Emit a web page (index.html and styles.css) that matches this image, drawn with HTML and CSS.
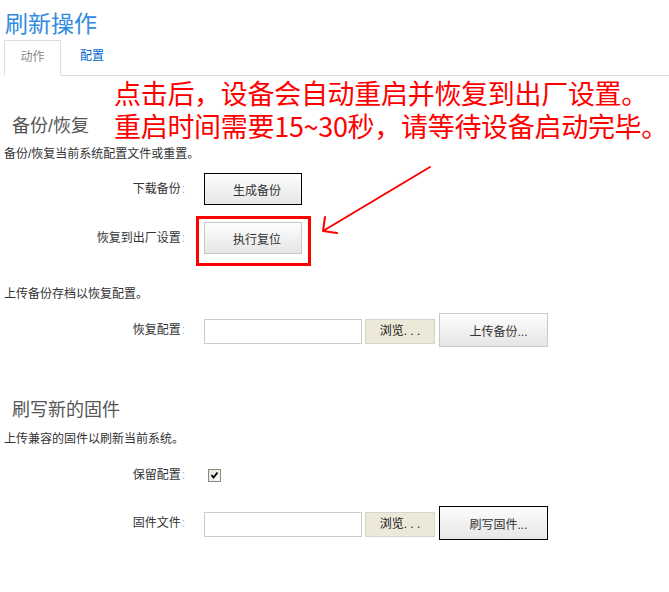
FILE: index.html
```html
<!DOCTYPE html>
<html lang="zh-CN">
<head>
    <meta charset="UTF-8">
    <title>刷新操作</title>
    <link rel="stylesheet" href="styles.css">
</head>
<body>
    <div class="page">
        <h2 class="page-title">刷新操作</h2>

        <ul class="tabs">
            <li class="active"><a href="#">动作</a></li>
            <li><a href="#">配置</a></li>
        </ul>

        <div class="section">
            <h3>备份/恢复</h3>
            <p class="desc">备份/恢复当前系统配置文件或重置。</p>

            <div class="row row-backup">
                <label class="row-label">下载备份<span class="colon">:</span></label>
                <button class="btn btn-focus">生成备份</button>
            </div>

            <div class="row row-reset">
                <label class="row-label">恢复到出厂设置<span class="colon">:</span></label>
                <span class="marked">
                    <button class="btn">执行复位</button>
                </span>
            </div>

            <p class="desc desc-upload">上传备份存档以恢复配置。</p>

            <div class="row row-file">
                <label class="row-label">恢复配置<span class="colon">:</span></label>
                <span class="file-input"></span>
                <span class="browse">浏览. . .</span>
                <button class="btn btn-wide">上传备份...</button>
            </div>
        </div>

        <div class="section section-flash">
            <h3>刷写新的固件</h3>
            <p class="desc">上传兼容的固件以刷新当前系统。</p>

            <div class="row row-keep">
                <label class="row-label">保留配置<span class="colon">:</span></label>
                <span class="check">
                    <svg width="9" height="8" viewBox="0 0 9 8"><path d="M1.5 4 L3.5 6.5 L7.5 1.5" fill="none" stroke="#000" stroke-width="1.8"/></svg>
                </span>
            </div>

            <div class="row row-firmware">
                <label class="row-label">固件文件<span class="colon">:</span></label>
                <span class="file-input"></span>
                <span class="browse">浏览. . .</span>
                <button class="btn btn-wide btn-focus">刷写固件...</button>
            </div>
        </div>

        <!-- annotation drawn over the page -->
        <div class="note">
            <div>点击后，设备会自动重启并恢复到出厂设置。</div>
            <div>重启时间需要15~30秒，请等待设备启动完毕。</div>
        </div>
        <svg class="arrow" width="669" height="300" viewBox="0 0 669 300">
            <path d="M430 167 L323 231 M323 231 L325 217 M323 231 L337 233" fill="none" stroke="#f00" stroke-width="2" stroke-linecap="round"/>
        </svg>
    </div>
</body>
</html>
```

FILE: styles.css
```css
body {
    margin: 0;
    font-family: "Liberation Sans", "Noto Sans CJK SC", sans-serif;
    font-size: 12px;
    color: #333;
    background: #fff;
}

.page {
    position: relative;
    width: 669px;
}

.page-title {
    margin: 0 0 2px 0;
    padding: 10px 0 0 5px;
    font-size: 23px;
    line-height: 28px;
    font-weight: normal;
    color: #2f8ae0;
}

.tabs {
    display: flex;
    list-style: none;
    margin: 0 0 0 4px;
    padding: 0;
    height: 35px;
    border-bottom: 1px solid #ddd;
}

.tabs li a {
    display: block;
    padding: 0 19px 2px 19px;
    line-height: 32px;
    color: #0066cc;
    text-decoration: none;
}

.tabs li.active {
    margin-bottom: -1px;
    border: 1px solid #ddd;
    border-bottom-color: #fff;
    background: #fff;
}

.tabs li.active a {
    width: 55px;
    padding: 0 0 1px 0;
    text-align: center;
    color: #888;
}

.section h3 {
    margin: 40px 0 0 12px;
    font-size: 18px;
    line-height: 20px;
    font-weight: normal;
    color: #555;
}

.section-flash h3 {
    margin-top: 53px;
}

.desc {
    margin: 10px 0 0 4px;
    line-height: 16px;
    color: #333;
}

.section-flash .desc {
    margin-top: 11px;
}

.desc-upload {
    margin-top: 32px;
}

.row {
    display: flex;
    align-items: center;
    height: 32px;
}

.row-label {
    width: 185px;
    margin-right: 19px;
    text-align: right;
    line-height: 16px;
    color: #333;
}

.colon {
    color: #8fb2d6;
    padding-left: 1px;
}

.row-backup { margin-top: 11px; }
.row-reset { margin-top: 17px; }
.row-file { margin-top: 11px; height: 34px; }
.row-keep { margin-top: 18px; height: 20px; }
.row-firmware { margin-top: 21px; height: 34px; }

.btn {
    box-sizing: border-box;
    width: 98px;
    height: 32px;
    padding: 0 0 0 8px;
    font-family: inherit;
    font-size: 12px;
    color: #333;
    border: 1px solid #c8c8c8;
    border-radius: 0;
    background: linear-gradient(#fdfdfd, #e6e6e6);
}

.btn-focus {
    border-color: #000;
}

.btn-wide {
    width: 109px;
    height: 34px;
    margin-left: 4px;
    padding-left: 10px;
}

.file-input {
    box-sizing: border-box;
    width: 158px;
    height: 25px;
    margin-top: 3px;
    border: 1px solid #ccc;
    background: #fff;
}

.browse {
    box-sizing: border-box;
    width: 70px;
    height: 25px;
    margin: 3px 0 0 3px;
    line-height: 23px;
    text-align: center;
    color: #111;
    border: 1px solid #d4d4cc;
    background: #ece9d8;
}

.check {
    box-sizing: border-box;
    display: flex;
    align-items: center;
    justify-content: center;
    width: 13px;
    height: 13px;
    margin-left: 4px;
    border: 1px solid #8a8a80;
    background: linear-gradient(135deg, #e4e2da, #fbfbf8);
}

.marked {
    position: relative;
    display: block;
}

.marked::after {
    content: "";
    position: absolute;
    left: -8px;
    top: -6px;
    right: -9px;
    bottom: -12px;
    border: 3px solid #f00;
}

.note {
    position: absolute;
    top: 76px;
    left: 114px;
    font-family: "Noto Sans CJK SC", sans-serif;
    font-size: 27px;
    line-height: 33px;
    letter-spacing: -0.3px;
    color: #f00;
    white-space: nowrap;
}

.arrow {
    position: absolute;
    top: 0;
    left: 0;
    pointer-events: none;
}
```
